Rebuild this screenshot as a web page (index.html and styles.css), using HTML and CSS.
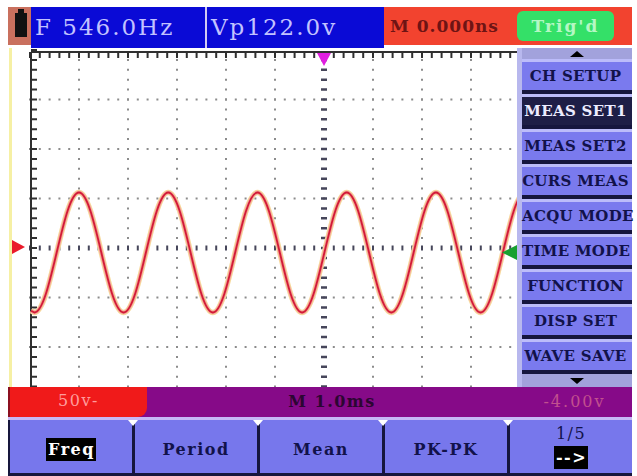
FILE: index.html
```html
<!DOCTYPE html>
<html lang="en">
<head>
  <meta charset="UTF-8" />
  <meta name="viewport" content="width=device-width, initial-scale=1.0"/>
  <title>Scope Display</title>
  <link rel="stylesheet" href="styles.css">
</head>
<body>
  <div class="scope">
    <div class="topbar">
      <div class="battery"><span class="cell"></span></div>
      <div class="readout freq">F 546.0Hz</div>
      <div class="readout vp">Vp122.0v</div>
      <div class="trigzone">
        <span class="delay">M 0.000ns</span>
        <span class="trig">Trig'd</span>
      </div>
    </div>

    <div class="main">
      <svg class="plot" width="517" height="339" viewBox="0 0 517 339">
        <defs>
          <path id="wave" d="M31,262.8L34.38,264.5
            c8.07,0 15.03,-29.26 22.31,-60c7.28,-30.74 14.24,-60 22.31,-60c8.07,0 15.03,29.26 22.31,60c7.28,30.74 14.24,60 22.31,60
            c8.07,0 15.03,-29.26 22.31,-60c7.28,-30.74 14.24,-60 22.31,-60c8.07,0 15.03,29.26 22.31,60c7.28,30.74 14.24,60 22.31,60
            c8.07,0 15.03,-29.26 22.31,-60c7.28,-30.74 14.24,-60 22.31,-60c8.07,0 15.03,29.26 22.31,60c7.28,30.74 14.24,60 22.31,60
            c8.07,0 15.03,-29.26 22.31,-60c7.28,-30.74 14.24,-60 22.31,-60c8.07,0 15.03,29.26 22.31,60c7.28,30.74 14.24,60 22.31,60
            c8.07,0 15.03,-29.26 22.31,-60c7.28,-30.74 14.24,-60 22.31,-60c8.07,0 15.03,29.26 22.31,60c7.28,30.74 14.24,60 22.31,60
            c8.07,0 15.03,-29.26 22.31,-60c7.28,-30.74 14.24,-60 22.31,-60"/>
        </defs>

        <rect class="rail" x="9" y="-5" width="3" height="344"/>

        <!-- dotted grid -->
        <g class="grid">
          <line x1="29" y1="51.5" x2="517" y2="51.5"/>
          <line x1="29" y1="101" x2="517" y2="101"/>
          <line x1="29" y1="150.5" x2="517" y2="150.5"/>
          <line x1="29" y1="249.5" x2="517" y2="249.5"/>
          <line x1="29" y1="299" x2="517" y2="299"/>
        </g>
        <g class="grid cols">
          <line x1="79" y1="10.9" x2="79" y2="339"/>
          <line x1="128" y1="10.9" x2="128" y2="339"/>
          <line x1="177" y1="10.9" x2="177" y2="339"/>
          <line x1="226" y1="10.9" x2="226" y2="339"/>
          <line x1="275" y1="10.9" x2="275" y2="339"/>
          <line x1="373" y1="10.9" x2="373" y2="339"/>
          <line x1="422" y1="10.9" x2="422" y2="339"/>
          <line x1="471" y1="10.9" x2="471" y2="339"/>
        </g>

        <!-- centre cross -->
        <line class="center-v" x1="324" y1="10.65" x2="324" y2="339"/>
        <line class="center-h" x1="29" y1="200" x2="517" y2="200"/>

        <!-- axes -->
        <line class="axis" x1="31" y1="4" x2="517" y2="4"/>
        <line class="ticks" x1="29" y1="7" x2="517" y2="7"/>
        <line class="axis" x1="31" y1="4" x2="31" y2="339"/>
        <line class="ticks left" x1="34" y1="1" x2="34" y2="339"/>

        <use href="#wave" class="wave-glow"/>
        <use href="#wave" class="wave-mid"/>
        <use href="#wave" class="wave-core"/>

        <polygon class="mark-ch" points="12,192 25,199 12,206"/>
        <polygon class="mark-time" points="317,5 331,5 324,18"/>
        <polygon class="mark-trig" points="517,197 517,212 502,204.5"/>
      </svg>

      <div class="menu">
        <div class="arrow up"></div>
        <div class="item">CH SETUP</div>
        <div class="item active">MEAS SET1</div>
        <div class="item">MEAS SET2</div>
        <div class="item">CURS MEAS</div>
        <div class="item">ACQU MODE</div>
        <div class="item">TIME MODE</div>
        <div class="item">FUNCTION</div>
        <div class="item">DISP SET</div>
        <div class="item">WAVE SAVE</div>
        <div class="arrow down"></div>
      </div>
    </div>

    <div class="status">
      <div class="vscale">50v-</div>
      <div class="timebase">M 1.0ms</div>
      <div class="offset">-4.00v</div>
    </div>

    <div class="softkeys">
      <div class="key"><span class="hl">Freq</span></div>
      <div class="key">Period</div>
      <div class="key">Mean</div>
      <div class="key">PK-PK</div>
      <div class="key pager">
        <span class="page">1/5</span>
        <span class="next">--&gt;</span>
      </div>
    </div>
  </div>
</body>
</html>
```

FILE: styles.css
```css
body {
  margin: 0;
  background: #fff;
  font-family: "DejaVu Serif", "Liberation Serif", serif;
}

.scope {
  width: 637px;
  height: 476px;
  overflow: hidden;
  padding-top: 7px;
  box-sizing: border-box;
}

/* top readout bar */
.topbar {
  display: flex;
  align-items: flex-start;
  height: 41px;
  width: 624px;
  margin-left: 8px;
}

.battery {
  width: 23px;
  height: 38px;
  background: #c9705e;
  padding: 6px 0 0 7px;
  box-sizing: border-box;
}

.cell {
  position: relative;
  display: block;
  width: 12px;
  height: 24px;
  background: #111;
}

.cell::before {
  content: "";
  position: absolute;
  top: -4px;
  left: 3px;
  width: 6px;
  height: 4px;
  background: #111;
}

.readout {
  height: 41px;
  background: #0a0ad6;
  color: #c2c2ff;
  font-size: 23px;
  letter-spacing: 2px;
  line-height: 41px;
  padding-left: 4px;
  box-sizing: border-box;
  white-space: nowrap;
}

.freq {
  width: 174px;
}

.vp {
  width: 179px;
  border-left: 2px solid #d2cbf2;
  padding-left: 4px;
}

.trigzone {
  flex: 1;
  height: 38px;
  display: flex;
  align-items: center;
  background: #f2432f;
}

.delay {
  padding-left: 6px;
  font-size: 17px;
  font-weight: bold;
  letter-spacing: 1px;
  color: #6e1414;
}

.trig {
  margin-left: auto;
  margin-right: 18px;
  width: 97px;
  height: 30px;
  line-height: 30px;
  text-align: center;
  background: #34e068;
  color: #b4f7c4;
  border-radius: 6px;
  font-size: 17px;
  font-weight: bold;
  letter-spacing: 2px;
}

/* plot + side menu */
.main {
  display: flex;
  height: 339px;
}

.plot {
  display: block;
  flex: none;
}

.rail {
  fill: #f6f0a4;
}

.grid line {
  stroke: #8c8c8c;
  stroke-width: 2;
  stroke-dasharray: 2 7.8;
}

.grid.cols line {
  stroke-dasharray: 2 7.9;
}

.center-v {
  stroke: #46465a;
  stroke-width: 6;
  stroke-dasharray: 2.5 7.4;
}

.center-h {
  stroke: #46465a;
  stroke-width: 5;
  stroke-dasharray: 2 7.8;
}

.axis {
  stroke: #303030;
  stroke-width: 2;
}

.ticks {
  stroke: #303030;
  stroke-width: 6;
  stroke-dasharray: 2 7.8;
}

.ticks.left {
  stroke-dasharray: 2 7.9;
}

.wave-glow, .wave-mid, .wave-core {
  fill: none;
  stroke-linejoin: round;
}

.wave-glow {
  stroke: #f7d99c;
  stroke-width: 5.5;
}

.wave-mid {
  stroke: #f29a9a;
  stroke-width: 3.5;
}

.wave-core {
  stroke: #d21c34;
  stroke-width: 1.8;
}

.mark-ch {
  fill: #ea1a2a;
}

.mark-time {
  fill: #e01ee0;
}

.mark-trig {
  fill: #18a030;
}

.menu {
  width: 115px;
  display: flex;
  flex-direction: column;
  background: #b8b8ee;
  padding-left: 5px;
  box-sizing: border-box;
}

.arrow {
  display: flex;
  justify-content: center;
  align-items: center;
  background: #a2a2dc;
}

.arrow.up {
  height: 11px;
}

.arrow.down {
  flex: 1;
}

.arrow.up::after {
  content: "";
  border-left: 7px solid transparent;
  border-right: 7px solid transparent;
  border-bottom: 6px solid #000;
}

.arrow.down::after {
  content: "";
  border-left: 7px solid transparent;
  border-right: 7px solid transparent;
  border-top: 6px solid #000;
}

.item {
  height: 35px;
  box-sizing: border-box;
  border-top: 3px solid #bcbcfa;
  border-bottom: 4px solid #16163e;
  background: #7a7aee;
  color: #12124a;
  font-size: 15px;
  font-weight: bold;
  line-height: 28px;
  text-align: center;
  white-space: nowrap;
  letter-spacing: 0.3px;
  padding-right: 3px;
}

.item.active {
  background: #1e1e46;
  color: #ececff;
}

/* status line */
.status {
  display: flex;
  height: 30px;
  width: 624px;
  margin-left: 8px;
  background: #860a88;
  font-size: 16px;
  letter-spacing: 1.5px;
  line-height: 30px;
}

.vscale {
  width: 139px;
  box-sizing: border-box;
  border-left: 2px solid #8c1020;
  border-radius: 0 0 9px 0;
  background: #f01a1a;
  color: #ff9c9c;
  text-align: center;
  line-height: 28px;
}

.timebase {
  flex: 1;
  text-align: center;
  color: #2c0632;
  font-weight: bold;
}

.offset {
  width: 115px;
  text-align: center;
  color: #c2508e;
  letter-spacing: 2px;
}

/* soft keys */
.softkeys {
  display: flex;
  gap: 3px;
  height: 59px;
  width: 624px;
  margin-left: 8px;
  box-sizing: border-box;
  padding: 0 0 3px 2px;
  border-top: 3px solid #c6b8f6;
  background: #16163c;
}

.key {
  position: relative;
  flex: 1;
  display: flex;
  flex-direction: column;
  align-items: center;
  justify-content: center;
  padding-top: 5px;
  box-sizing: border-box;
  background: #7777ec;
  color: #12124a;
  font-size: 16px;
  font-weight: bold;
  letter-spacing: 1.5px;
}

.key + .key::before {
  content: "";
  position: absolute;
  top: 0;
  left: -7px;
  border-left: 5px solid transparent;
  border-right: 5px solid transparent;
  border-top: 6px solid #fff;
}

.hl, .next {
  background: #000;
  color: #fff;
  padding: 0 1px 0 2px;
  line-height: 23px;
}

.pager {
  padding-top: 0;
}

.page {
  line-height: 17px;
  margin-bottom: 4px;
  font-weight: normal;
}
```
